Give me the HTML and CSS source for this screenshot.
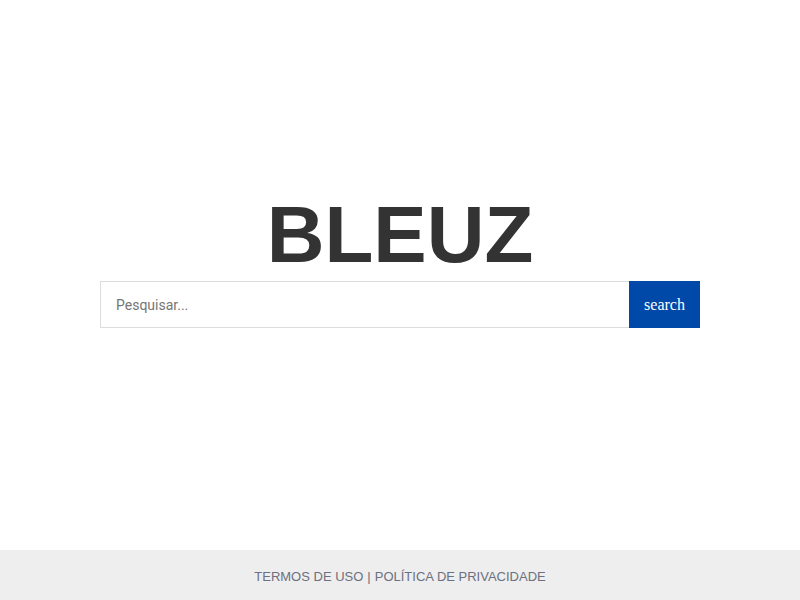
FILE: index.html
```html
<!DOCTYPE html>
<html lang="pt">
<head>
<meta charset="utf-8">
<title>Bleuz</title>
<link rel="stylesheet" href="styles.css">
</head>
<body>
<div class="page">
  <main class="main">
    <h1 class="logo">BLEUZ</h1>
    <form class="search">
      <input class="search-input" type="text" placeholder="Pesquisar...">
      <button class="search-btn" type="button">search</button>
    </form>
  </main>
  <footer class="footer">
    <a class="footer-link" href="#">TERMOS DE USO</a> | <a class="footer-link" href="#">POLÍTICA DE PRIVACIDADE</a>
  </footer>
</div>
</body>
</html>
```
FILE: styles.css
```css
html, body {
  margin: 0;
  padding: 0;
  height: 100%;
  background: #fff;
}
.page {
  display: flex;
  flex-direction: column;
  height: 100vh;
}
.main {
  flex: 1;
  display: flex;
  flex-direction: column;
  align-items: center;
  padding-top: 195px;
}
.logo {
  margin: 0;
  font-family: "Liberation Sans", Arial, sans-serif;
  font-weight: bold;
  font-size: 80px;
  line-height: 80px;
  color: #333;
}
.search {
  display: flex;
  width: 600px;
  margin: 6px 0 0 0;
}
.search-input {
  flex: 1;
  box-sizing: border-box;
  height: 47px;
  border: 1px solid #dcdcdc;
  border-right: none;
  padding: 0 15px;
  font-family: Roboto, "Liberation Sans", sans-serif;
  font-size: 14px;
  color: #333;
  outline: none;
  margin: 0;
}
.search-input::placeholder {
  color: #757575;
}
.search-btn {
  width: 71px;
  height: 47px;
  border: none;
  margin: 0;
  background: #0049a8;
  color: #fff;
  font-family: "Liberation Serif", "Times New Roman", serif;
  font-size: 16px;
  padding: 0;
}
.footer {
  height: 50px;
  background: #eee;
  display: flex;
  align-items: center;
  justify-content: center;
  gap: 4px;
  font-family: "Liberation Sans", Arial, sans-serif;
  font-size: 13px;
  color: #6c7080;
  padding-top: 3px;
  box-sizing: border-box;
}
.footer-link {
  color: #6c7080;
  text-decoration: none;
}
```
